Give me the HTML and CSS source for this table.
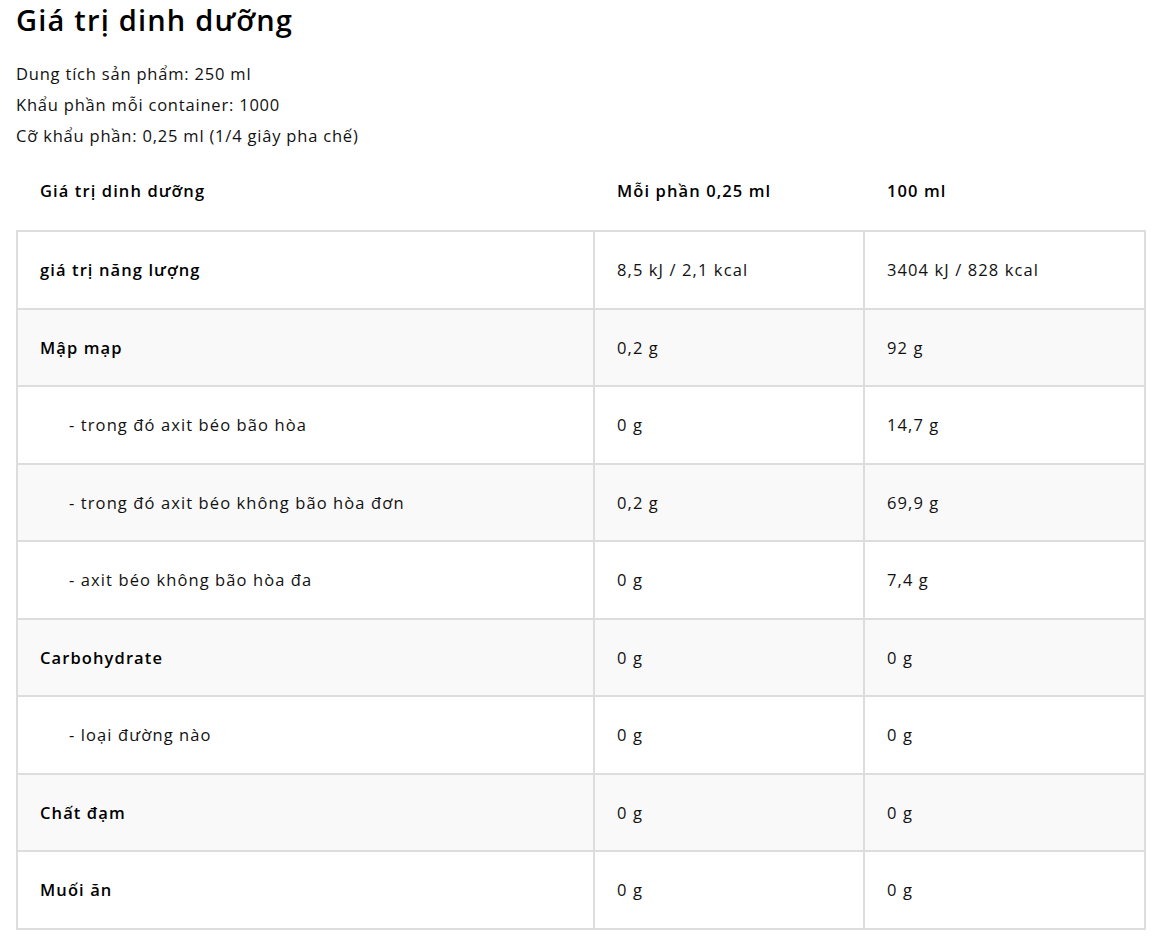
FILE: index.html
```html
<!DOCTYPE html>
<html lang="vi">
<head>
<meta charset="utf-8">
<title>Giá trị dinh dưỡng</title>
<link rel="stylesheet" href="styles.css">
</head>
<body>
<main class="page">
  <h1 class="title">Giá trị dinh dưỡng</h1>
  <div class="info">
    <p>Dung tích sản phẩm: 250 ml</p>
    <p>Khẩu phần mỗi container: 1000</p>
    <p>Cỡ khẩu phần: 0,25 ml (1/4 giây pha chế)</p>
  </div>
  <table class="nutrition">
    <colgroup>
      <col class="c1"><col class="c2"><col class="c3">
    </colgroup>
    <thead>
      <tr><th>Giá trị dinh dưỡng</th><th>Mỗi phần 0,25 ml</th><th>100 ml</th></tr>
    </thead>
    <tbody>
      <tr><td class="strong">giá trị năng lượng</td><td>8,5 kJ / 2,1 kcal</td><td>3404 kJ / 828 kcal</td></tr>
      <tr><td class="strong">Mập mạp</td><td>0,2 g</td><td>92 g</td></tr>
      <tr><td class="sub">- trong đó axit béo bão hòa</td><td>0 g</td><td>14,7 g</td></tr>
      <tr><td class="sub">- trong đó axit béo không bão hòa đơn</td><td>0,2 g</td><td>69,9 g</td></tr>
      <tr><td class="sub">- axit béo không bão hòa đa</td><td>0 g</td><td>7,4 g</td></tr>
      <tr><td class="strong">Carbohydrate</td><td>0 g</td><td>0 g</td></tr>
      <tr><td class="sub">- loại đường nào</td><td>0 g</td><td>0 g</td></tr>
      <tr><td class="strong">Chất đạm</td><td>0 g</td><td>0 g</td></tr>
      <tr><td class="strong">Muối ăn</td><td>0 g</td><td>0 g</td></tr>
    </tbody>
  </table>
</main>
</body>
</html>
```
FILE: styles.css
```css
html, body {
  margin: 0;
  padding: 0;
  background: #fff;
}
body {
  font-family: "Open Sans", "Noto Sans", sans-serif;
  color: #111;
}
.page {
  padding: 0 18px 0 16px;
}
.title {
  margin: 0;
  padding-top: 1px;
  font-size: 29px;
  line-height: 38px;
  font-weight: 600;
  letter-spacing: 1.2px;
  color: #000;
}
.info {
  margin-top: 19px;
}
.info p {
  margin: 0;
  font-size: 16.5px;
  line-height: 31px;
  letter-spacing: 0.8px;
}
.nutrition {
  width: 100%;
  border-collapse: collapse;
  table-layout: fixed;
  margin-top: 1px;
  font-size: 16.5px;
  letter-spacing: 1.1px;
}
.c1 { width: 577px; }
.c2 { width: 270px; }
.nutrition th {
  text-align: left;
  font-weight: 600;
  padding: 25px 22px 25px 23px;
  line-height: 28px;
  color: #000;
}
.nutrition td {
  border: 2px solid #dddddd;
  padding: 24px 22px 24px;
  line-height: 27.5px;
}
.nutrition tbody tr:nth-child(even) td {
  background: #f9f9f9;
}
.nutrition td.strong {
  font-weight: 600;
  color: #000;
}
.nutrition td.sub {
  padding-left: 51px;
}
```
